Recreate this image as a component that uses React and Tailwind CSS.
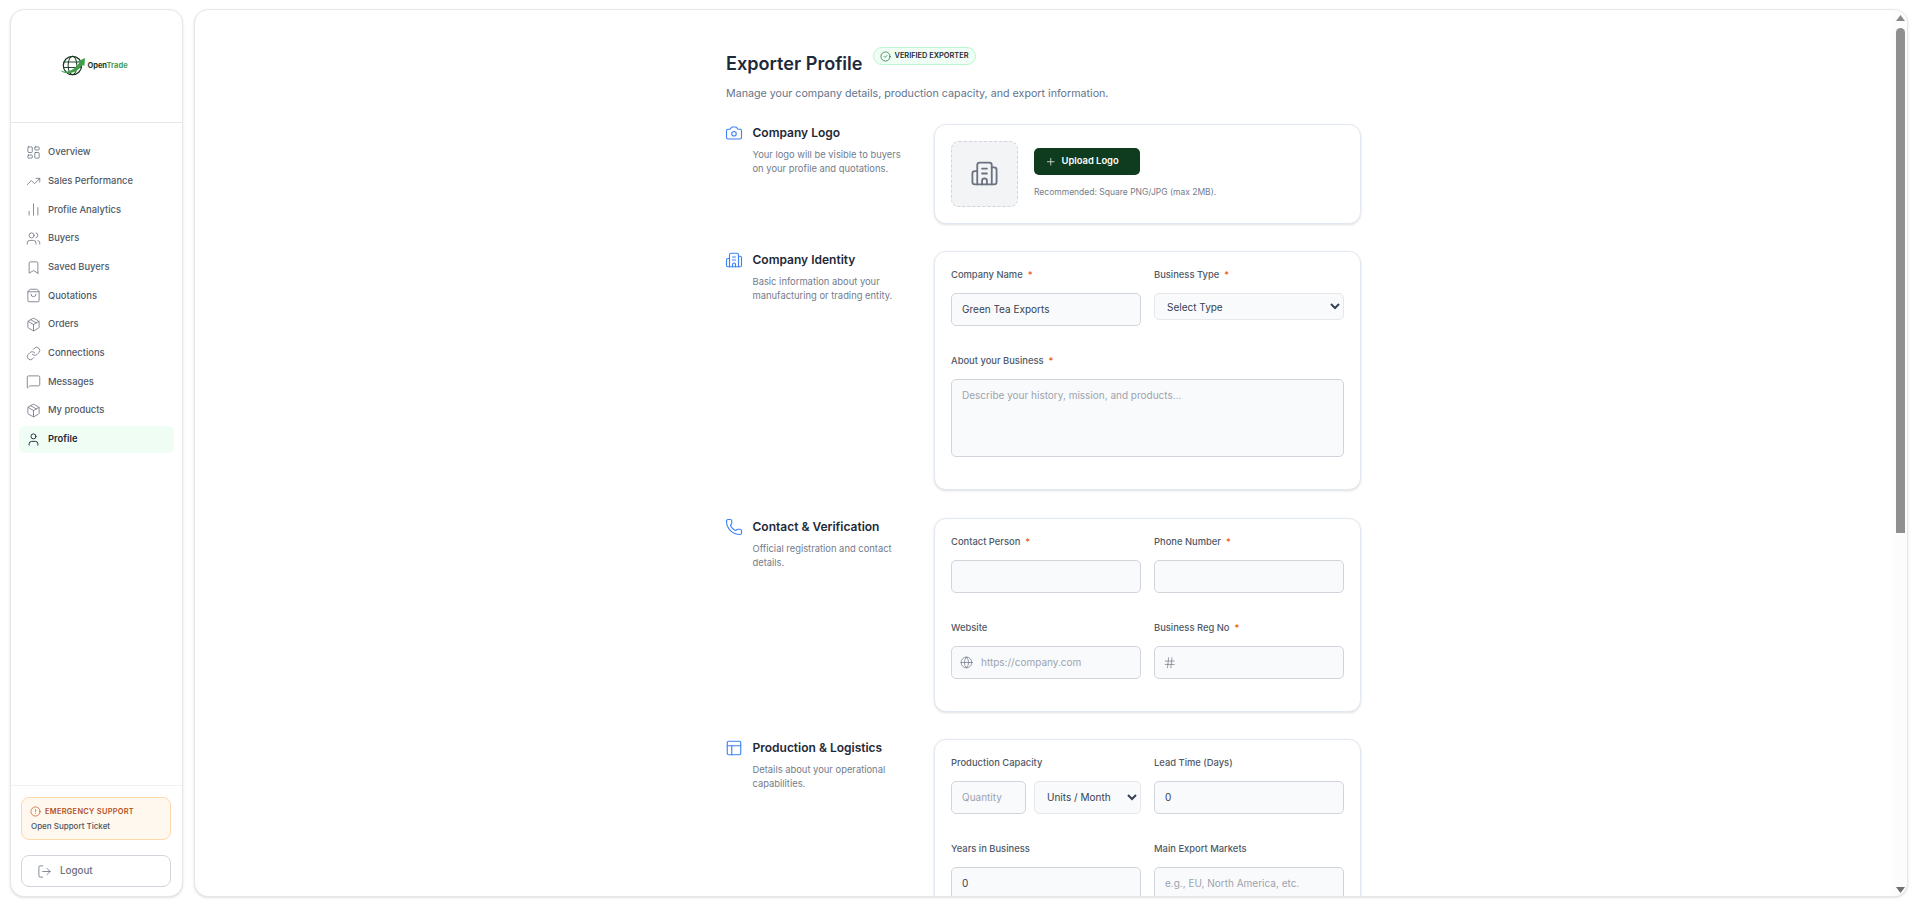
import React from "react";
import {
  LayoutDashboard, TrendingUp, ChartNoAxesColumn, Users, Bookmark, ShoppingBag, Package, Link, MessageSquare, User,
  CircleAlert, LogOut, CircleCheck, Camera, Building2, Phone, Globe, Hash, PanelsTopLeft, Plus,
} from "lucide-react";

const nav = [
  ["Overview", LayoutDashboard],
  ["Sales Performance", TrendingUp],
  ["Profile Analytics", ChartNoAxesColumn],
  ["Buyers", Users],
  ["Saved Buyers", Bookmark],
  ["Quotations", ShoppingBag],
  ["Orders", Package],
  ["Connections", Link],
  ["Messages", MessageSquare],
  ["My products", Package],
];

function Logo() {
  return (
    <div className="flex items-center -ml-[6px] mt-[2px]">
      <svg width="27" height="22" viewBox="0 0 27 22" fill="none">
        <circle cx="13.5" cy="10.5" r="9.2" stroke="#14361f" strokeWidth="1.2" />
        <ellipse cx="13.5" cy="10.5" rx="4.4" ry="9.2" stroke="#14361f" strokeWidth="1" />
        <path d="M5 7h17M4.5 12.5h18" stroke="#14361f" strokeWidth="0.9" />
        <path d="M1 15c6 3.5 14 1 19.5-7.5l-1.8-1L26 3l-.6 8-1.9-1.3C17.5 19 6 20.5 1 15z" fill="#3f9e47" />
      </svg>
      <span className="text-[7.5px] font-bold leading-none ml-[1px]">
        <span className="text-[#16361f]">Open</span>
        <span className="text-[#4a9d55]">Trade</span>
      </span>
    </div>
  );
}

function Sidebar() {
  return (
    <aside className="w-[173px] shrink-0 bg-white border border-[#e5e7eb] rounded-[14px] shadow-sm flex flex-col overflow-hidden">
      <div className="h-[113px] shrink-0 border-b border-[#e5e7eb] flex items-center justify-center pb-[3px]">
        <Logo />
      </div>
      <nav className="flex-1 px-2 pt-[15px] flex flex-col">
        {nav.map(([label, Icon]) => (
          <div key={label} className="h-[28.7px] flex items-center pl-[7px] text-[9.4px] font-medium text-[#4f5967]">
            <Icon size={15} strokeWidth={1.3} className="text-[#6b7280] mr-[7px] shrink-0" />
            {label}
          </div>
        ))}
        <div className="h-[27px] mt-px flex items-center pl-[7px] rounded-md bg-[#f0fdf4] text-[9.4px] font-semibold text-[#1f2937]">
          <User size={15} strokeWidth={1.5} className="text-[#1f2937] mr-[7px] shrink-0" />
          Profile
        </div>
      </nav>
      <div className="border-t border-[#f1f2f4] pl-[10px] pr-[11px] pt-[11px] pb-[9px] flex flex-col gap-[15px]">
        <div className="h-[43px] rounded-lg border border-[#fed7aa] bg-[#fff8ee] pl-[8px] flex flex-col justify-center gap-[3px]">
          <div className="flex items-center gap-[4px] text-[7.4px] font-semibold tracking-[0.3px] text-[#b4521f] leading-[11px]">
            <CircleAlert size={11} strokeWidth={1.4} className="text-[#c2410c]" />
            EMERGENCY SUPPORT
          </div>
          <div className="text-[8px] leading-[12px] font-medium text-[#4b5563] ml-px">Open Support Ticket</div>
        </div>
        <div className="h-[32px] rounded-lg border border-[#d1d5db] bg-white flex items-center pl-[15px] text-[9.8px] font-medium text-[#6b7280]">
          <LogOut size={15} strokeWidth={1.3} className="mr-[8px]" />
          Logout
        </div>
      </div>
    </aside>
  );
}

function Label({ text, req }) {
  return (
    <label className="block h-[14px] leading-[14px] mb-[11px] text-[9.4px] font-medium text-[#4f5967]">
      {text}
      {req && <span className="text-[#ea580c] ml-[5px]">*</span>}
    </label>
  );
}

const inputCls =
  "h-[33px] rounded-[5px] border border-[#d1d5db] bg-[#f9fafb] px-[10px] text-[10px] text-[#374151] placeholder:text-[#9ca3af] outline-none";
const selectCls =
  "rounded-[5px] border border-[#e5e7eb] bg-[#f9fafb] px-[8px] text-[10px] font-normal text-[#374151] outline-none";

function Field({ label, req, children }) {
  return (
    <div className="mb-4">
      <Label text={label} req={req} />
      {children}
    </div>
  );
}

function Section({ icon: Icon, title, desc, children, className = "" }) {
  return (
    <section className={"flex " + className}>
      <div className="w-[208px] shrink-0 flex">
        <Icon size={18} strokeWidth={1.5} className="text-[#3b82f6] shrink-0 -ml-[1.5px] mr-[10px]" />
        <div className="w-[160px]">
          <h2 className="text-[12px] leading-[17px] font-semibold text-[#1f2937]">{title}</h2>
          <p className="mt-[7px] text-[9.4px] leading-[14px] text-[#747c8b]">{desc}</p>
        </div>
      </div>
      <div className="w-[427px] shrink-0 bg-white rounded-[12px] border border-[#e2e8f0] shadow-sm p-4">{children}</div>
    </section>
  );
}

function ProfileForm() {
  return (
    <div className="w-[635px] mx-auto pt-[37px]">
      <div className="flex items-start">
        <h1 className="text-[18.1px] leading-[28px] mt-[2px] font-semibold text-[#1e293b]">Exporter Profile</h1>
        <span className="ml-[10px] mt-0 h-[18px] rounded-full border border-[#bbf7d0] bg-[#f0fdf4] pl-[6px] pr-[6px] flex items-center gap-[4px] text-[7.4px] font-semibold text-[#1f2937]">
          <CircleCheck size={11} strokeWidth={1.5} className="text-[#166534]" />
          VERIFIED EXPORTER
        </span>
      </div>
      <p className="mt-[8px] text-[10.7px] leading-[17px] text-[#64748b]">
        Manage your company details, production capacity, and export information.
      </p>

      <Section icon={Camera} title="Company Logo" desc="Your logo will be visible to buyers on your profile and quotations." className="mt-[21.5px]">
        <div className="flex items-center">
          <div className="w-[67px] h-[66px] rounded-lg border border-dashed border-[#d1d5db] bg-[#f3f4f6] flex items-center justify-center">
            <Building2 size={29} strokeWidth={1.5} className="text-[#6b7280]" />
          </div>
          <div className="ml-4">
            <button className="w-[106px] h-[27px] rounded-[5px] bg-[#0f3b1e] flex items-center pl-[11px] gap-[5px] text-white text-[9.4px] font-semibold">
              <Plus size={11.5} strokeWidth={1.5} />
              Upload Logo
            </button>
            <p className="mt-[11px] text-[8.5px] leading-[13px] text-[#747c8b]">Recommended: Square PNG/JPG (max 2MB).</p>
          </div>
        </div>
      </Section>

      <Section icon={Building2} title="Company Identity" desc="Basic information about your manufacturing or trading entity." className="mt-[27px]">
        <div className="grid grid-cols-2 gap-x-[13px] gap-y-3">
          <Field label="Company Name" req>
            <input className={inputCls + " w-full"} defaultValue="Green Tea Exports" />
          </Field>
          <Field label="Business Type" req>
            <select className={selectCls + " w-full h-[27px]"} defaultValue="Select Type">
              <option>Select Type</option>
            </select>
          </Field>
          <div className="col-span-2">
            <Field label="About your Business" req>
              <textarea
                className="w-full h-[78px] block rounded-[5px] border border-[#d1d5db] bg-[#f9fafb] px-[10px] py-[8px] text-[10px] placeholder:text-[#9ca3af] outline-none resize-none"
                placeholder="Describe your history, mission, and products..."
              />
            </Field>
          </div>
        </div>
      </Section>

      <Section icon={Phone} title="Contact & Verification" desc="Official registration and contact details." className="mt-[28px]">
        <div className="grid grid-cols-2 gap-x-[13px] gap-y-3">
          <Field label="Contact Person" req>
            <input className={inputCls + " w-full"} />
          </Field>
          <Field label="Phone Number" req>
            <input className={inputCls + " w-full"} />
          </Field>
          <Field label="Website">
            <div className="relative">
              <Globe size={13} strokeWidth={1.3} className="absolute left-[9px] top-[10px] text-[#6b7280]" />
              <input className={inputCls + " w-full pl-[29px]"} placeholder="https://company.com" />
            </div>
          </Field>
          <Field label="Business Reg No" req>
            <div className="relative">
              <Hash size={13.5} strokeWidth={1.2} className="absolute left-[9px] top-[10px] text-[#6b7280]" />
              <input className={inputCls + " w-full pl-[29px]"} />
            </div>
          </Field>
        </div>
      </Section>

      <Section icon={PanelsTopLeft} title="Production & Logistics" desc="Details about your operational capabilities." className="mt-[27px]">
        <div className="grid grid-cols-2 gap-x-[13px] gap-y-3">
          <Field label="Production Capacity">
            <div className="flex gap-2">
              <input className={inputCls + " w-[75px] shrink-0"} placeholder="Quantity" />
              <select className={selectCls + " h-[33px] flex-1 min-w-0"} defaultValue="Units / Month">
                <option>Units / Month</option>
              </select>
            </div>
          </Field>
          <Field label="Lead Time (Days)">
            <input className={inputCls + " w-full"} defaultValue="0" />
          </Field>
          <Field label="Years in Business">
            <input className={inputCls + " w-full"} defaultValue="0" />
          </Field>
          <Field label="Main Export Markets">
            <input className={inputCls + " w-full"} placeholder="e.g., EU, North America, etc." />
          </Field>
        </div>
      </Section>
      <div className="h-[300px]" />
    </div>
  );
}

function Scrollbar() {
  return (
    <div className="w-[15px] shrink-0 bg-[#fcfcfc] flex flex-col items-center pt-[5px] pb-[3px]">
      <svg width="9" height="6" viewBox="0 0 9 6" className="shrink-0 ml-[1px]">
        <path d="M4.5 0L9 6H0z" fill="#8a8a8a" />
      </svg>
      <div className="w-[9px] h-[505px] mt-[7px] ml-[1px] rounded-t-full rounded-b-sm bg-[#8f8f8f] shrink-0" />
      <svg width="9" height="6" viewBox="0 0 9 6" className="shrink-0 mt-auto ml-[1px]">
        <path d="M0 0H9L4.5 6z" fill="#6f6f6f" />
      </svg>
    </div>
  );
}

export default function App() {
  return (
    <div className="h-screen w-full bg-white font-[Inter,sans-serif] flex gap-[11px] pl-[10px] pr-[7px] pt-[9px] pb-[7px] overflow-hidden">
      <Sidebar />
      <main className="flex-1 min-w-0 bg-white border border-[#e5e7eb] rounded-[14px] shadow-sm overflow-hidden flex">
        <div className="flex-1 min-w-0 overflow-hidden">
          <ProfileForm />
        </div>
        <Scrollbar />
      </main>
    </div>
  );
}
